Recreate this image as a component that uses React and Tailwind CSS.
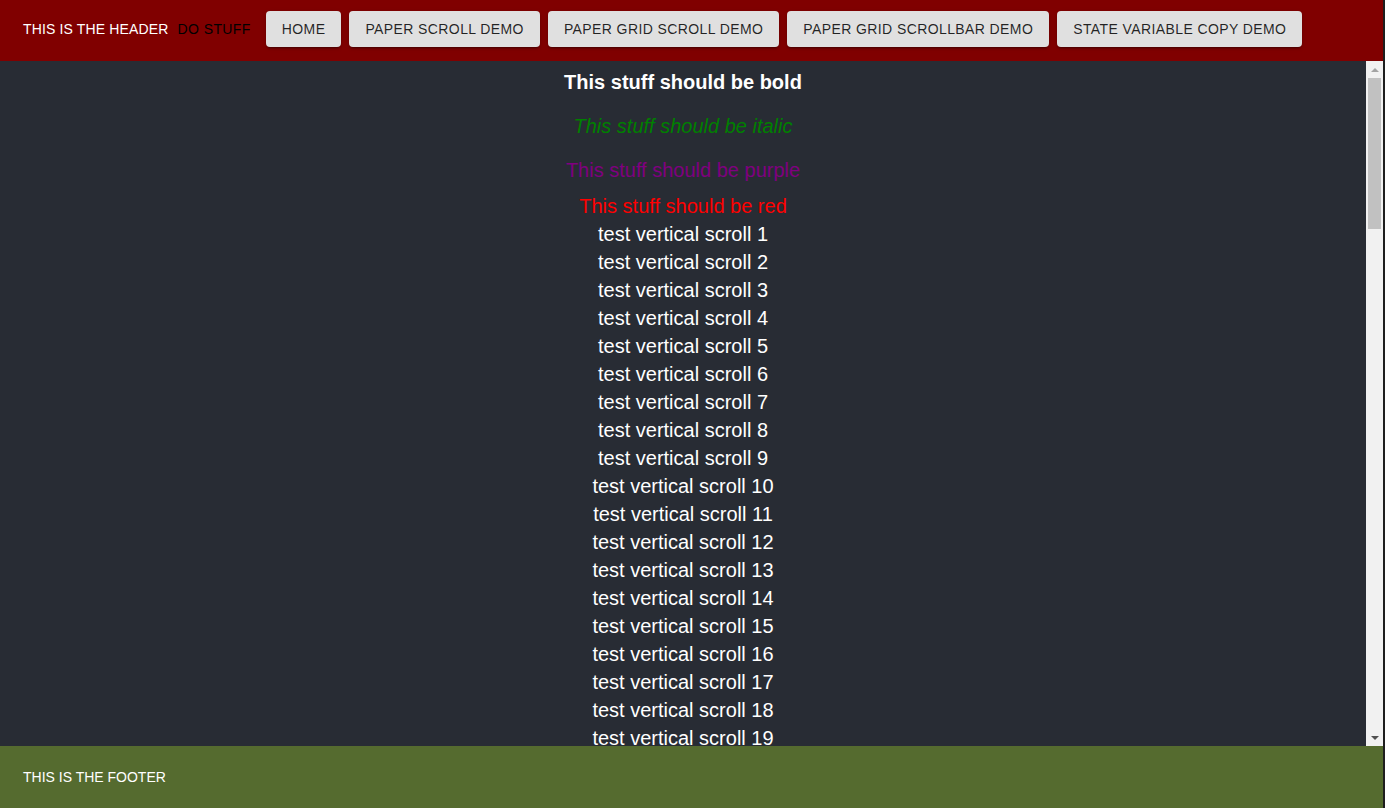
const buttons = [
  'Home',
  'Paper Scroll Demo',
  'Paper Grid Scroll Demo',
  'Paper Grid Scrollbar Demo',
  'State Variable Copy Demo',
];

const rows = Array.from({ length: 20 }, (_, i) => i + 1);

export default function App() {
  return (
    <div className="flex h-[808px] flex-col overflow-hidden border-r-2 border-[#1e1e1e] font-['Liberation_Sans',Arial,sans-serif]">
      <header className="flex h-[61px] shrink-0 items-center bg-[#800000] pb-[3px] pl-[23px] text-[14px]">
        <span className="tracking-[0.15px] text-white">THIS IS THE HEADER</span>
        <span className="ml-[9px] tracking-[0.4px] text-black">DO STUFF</span>
        <div className="ml-[15px] flex gap-2">
          {buttons.map((b) => (
            <button
              key={b}
              className="h-[36px] rounded-[4px] bg-[#e0e0e0] px-4 text-[14px] uppercase tracking-[0.4px] text-black/85 shadow-[0_3px_1px_-2px_rgba(0,0,0,0.2),0_2px_2px_0_rgba(0,0,0,0.14),0_1px_5px_0_rgba(0,0,0,0.12)]"
            >
              {b}
            </button>
          ))}
        </div>
      </header>

      <div className="flex min-h-0 flex-1">
        <main className="flex-1 overflow-hidden bg-[#282c34] pt-[7px] text-center text-[20px] leading-[28px] text-white">
          <div className="font-bold">This stuff should be bold</div>
          <div className="mt-4 italic text-[#008000]">This stuff should be italic</div>
          <div className="mt-4 text-[#800080]">This stuff should be purple</div>
          <div className="mt-2 text-[#ff0000]">This stuff should be red</div>
          {rows.map((n) => (
            <div key={n}>test vertical scroll {n}</div>
          ))}
        </main>

        {/* scrollbar */}
        <div className="flex w-[17px] shrink-0 flex-col bg-[#f1f1f1]">
          <div className="flex h-[17px] items-center justify-center">
            <div className="h-0 w-0 border-x-[4px] border-b-[4px] border-x-transparent border-b-[#a3a3a3]" />
          </div>
          <div className="mx-[2px] h-[151px] bg-[#c1c1c1]" />
          <div className="flex-1" />
          <div className="flex h-[17px] items-center justify-center">
            <div className="h-0 w-0 border-x-[4px] border-t-[4px] border-x-transparent border-t-[#505050]" />
          </div>
        </div>
      </div>

      <footer className="flex h-[62px] shrink-0 items-center bg-[#556b2f] pl-[23px] text-[14px] text-white">
        THIS IS THE FOOTER
      </footer>
    </div>
  );
}
